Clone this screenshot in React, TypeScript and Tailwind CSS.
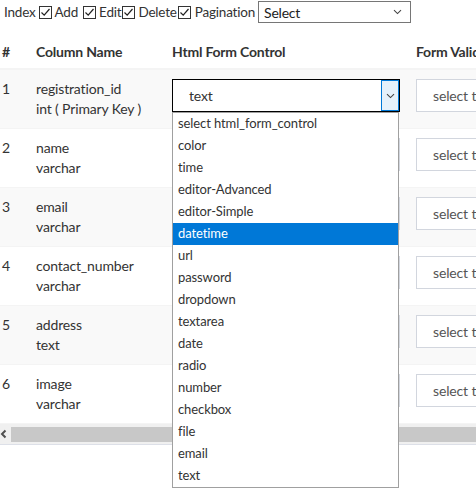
import React from "react";

const font = { fontFamily: "Lato, 'Liberation Sans', sans-serif" };

const rows = [
    { id: 1, name: "registration_id", type: "int ( Primary Key )" },
    { id: 2, name: "name", type: "varchar" },
    { id: 3, name: "email", type: "varchar" },
    { id: 4, name: "contact_number", type: "varchar" },
    { id: 5, name: "address", type: "text" },
    { id: 6, name: "image", type: "varchar" },
];

const options = [
    "select html_form_control",
    "color",
    "time",
    "editor-Advanced",
    "editor-Simple",
    "datetime",
    "url",
    "password",
    "dropdown",
    "textarea",
    "date",
    "radio",
    "number",
    "checkbox",
    "file",
    "email",
    "text",
];

function Chevron() {
    return (
        <svg width="9" height="6" viewBox="0 0 9 6" className="shrink-0">
            <path d="M1 1.2 L4.5 4.6 L8 1.2" fill="none" stroke="#444" strokeWidth="1.1" />
        </svg>
    );
}

function Check({ className }: { className: string }) {
    return (
        <span className={"inline-flex h-[13px] w-[13px] items-center justify-center border border-[#333] bg-white " + className}>
            <svg width="11" height="11" viewBox="0 0 11 11">
                <path d="M1.5 5.5 L4.2 8.2 L9.5 2" fill="none" stroke="#222" strokeWidth="1.2" />
            </svg>
        </span>
    );
}

export default function App() {
    return (
        <div className="relative h-[494px] w-[476px] overflow-hidden bg-white text-[#333]" style={font}>
            {/* Options bar */}
            <div className="flex h-[23px] items-center pl-[4px] pt-[1px] text-[13.5px] tracking-[-0.2px]">
                <span>Index</span>
                <Check className="ml-[3px] mr-[3px]" />
                <span>Add</span>
                <Check className="ml-[5px] mr-[3px]" />
                <span>Edit</span>
                <Check className="ml-[1px] mr-[3px]" />
                <span>Delete</span>
                <Check className="ml-[1px] mr-[4px]" />
                <span>Pagination</span>
                <div className="ml-[3px] flex h-[22px] w-[153px] items-center justify-between border border-[#767676] pl-[5px] pr-[8px] text-[14px] text-[#222]">
                    <span>Select</span>
                    <Chevron />
                </div>
            </div>

            {/* Table */}
            <div className="mt-[9px] w-[700px]">
                <div className="flex h-[38px] items-center border-b-2 border-[#f4f4f4] pt-[2px] text-[14px] font-bold tracking-[-0.2px]">
                    <div className="w-[28px] pl-[2px]">#</div>
                    <div className="w-[136px] pl-[8px]">Column Name</div>
                    <div className="w-[244px] pl-[8px]">Html Form Control</div>
                    <div className="pl-[8px]">Form Validation</div>
                </div>

                {rows.map((r) => (
                    <div
                        key={r.id}
                        className={
                            "flex h-[59px] items-start border-b border-[#f4f4f4] pt-[9px] text-[14px] tracking-[-0.15px] " +
                            (r.id % 2 === 1 ? "bg-[#f9f9f9]" : "bg-white")
                        }
                    >
                        <div className="w-[28px] pl-[2px] leading-[20px]">{r.id}</div>
                        <div className="w-[136px] pl-[8px] leading-[20px]">
                            <div>{r.name}</div>
                            <div>{r.type}</div>
                        </div>
                        <div className="w-[244px] px-[8px]">
                            {r.id === 1 ? (
                                <div className="flex h-[33px] w-[228px] items-stretch border border-black bg-white">
                                    <span className="flex flex-1 items-center pl-[16px] text-[#333]">text</span>
                                    <span className="flex w-[18px] items-center justify-center border border-[#0078d7] bg-[#e5f1fb]">
                                        <Chevron />
                                    </span>
                                </div>
                            ) : (
                                <div className="flex h-[33px] w-[228px] items-center border border-[#d2d6de] bg-white pl-[16px]">
                                    text
                                </div>
                            )}
                        </div>
                        <div className="px-[8px]">
                            <div className="flex h-[33px] w-[228px] items-center border border-[#d2d6de] bg-white pl-[16px] text-[#555]">
                                select type
                            </div>
                        </div>
                    </div>
                ))}
            </div>

            {/* Horizontal scrollbar */}
            <div className="flex h-[21px] items-center border-b border-[#dde0e8] bg-[#f0f0f0]">
                <svg width="10" height="10" viewBox="0 0 10 10">
                    <path d="M5.5 1.5 L2 5 L5.5 8.5" fill="none" stroke="#505050" strokeWidth="2" />
                </svg>
                <div className="ml-[1px] h-[15px] flex-1 bg-[#c8c8c8]" />
            </div>

            {/* Open dropdown list */}
            <div className="absolute left-[172px] top-[112px] w-[227px] border border-[#a0a0a0] bg-white text-[13px] tracking-[-0.1px]">
                {options.map((o) => (
                    <div
                        key={o}
                        className={
                            "flex h-[22px] items-center pl-[5px] " +
                            (o === "datetime" ? "bg-[#0078d7] text-white" : "text-[#333]")
                        }
                    >
                        {o}
                    </div>
                ))}
            </div>
        </div>
    );
}
